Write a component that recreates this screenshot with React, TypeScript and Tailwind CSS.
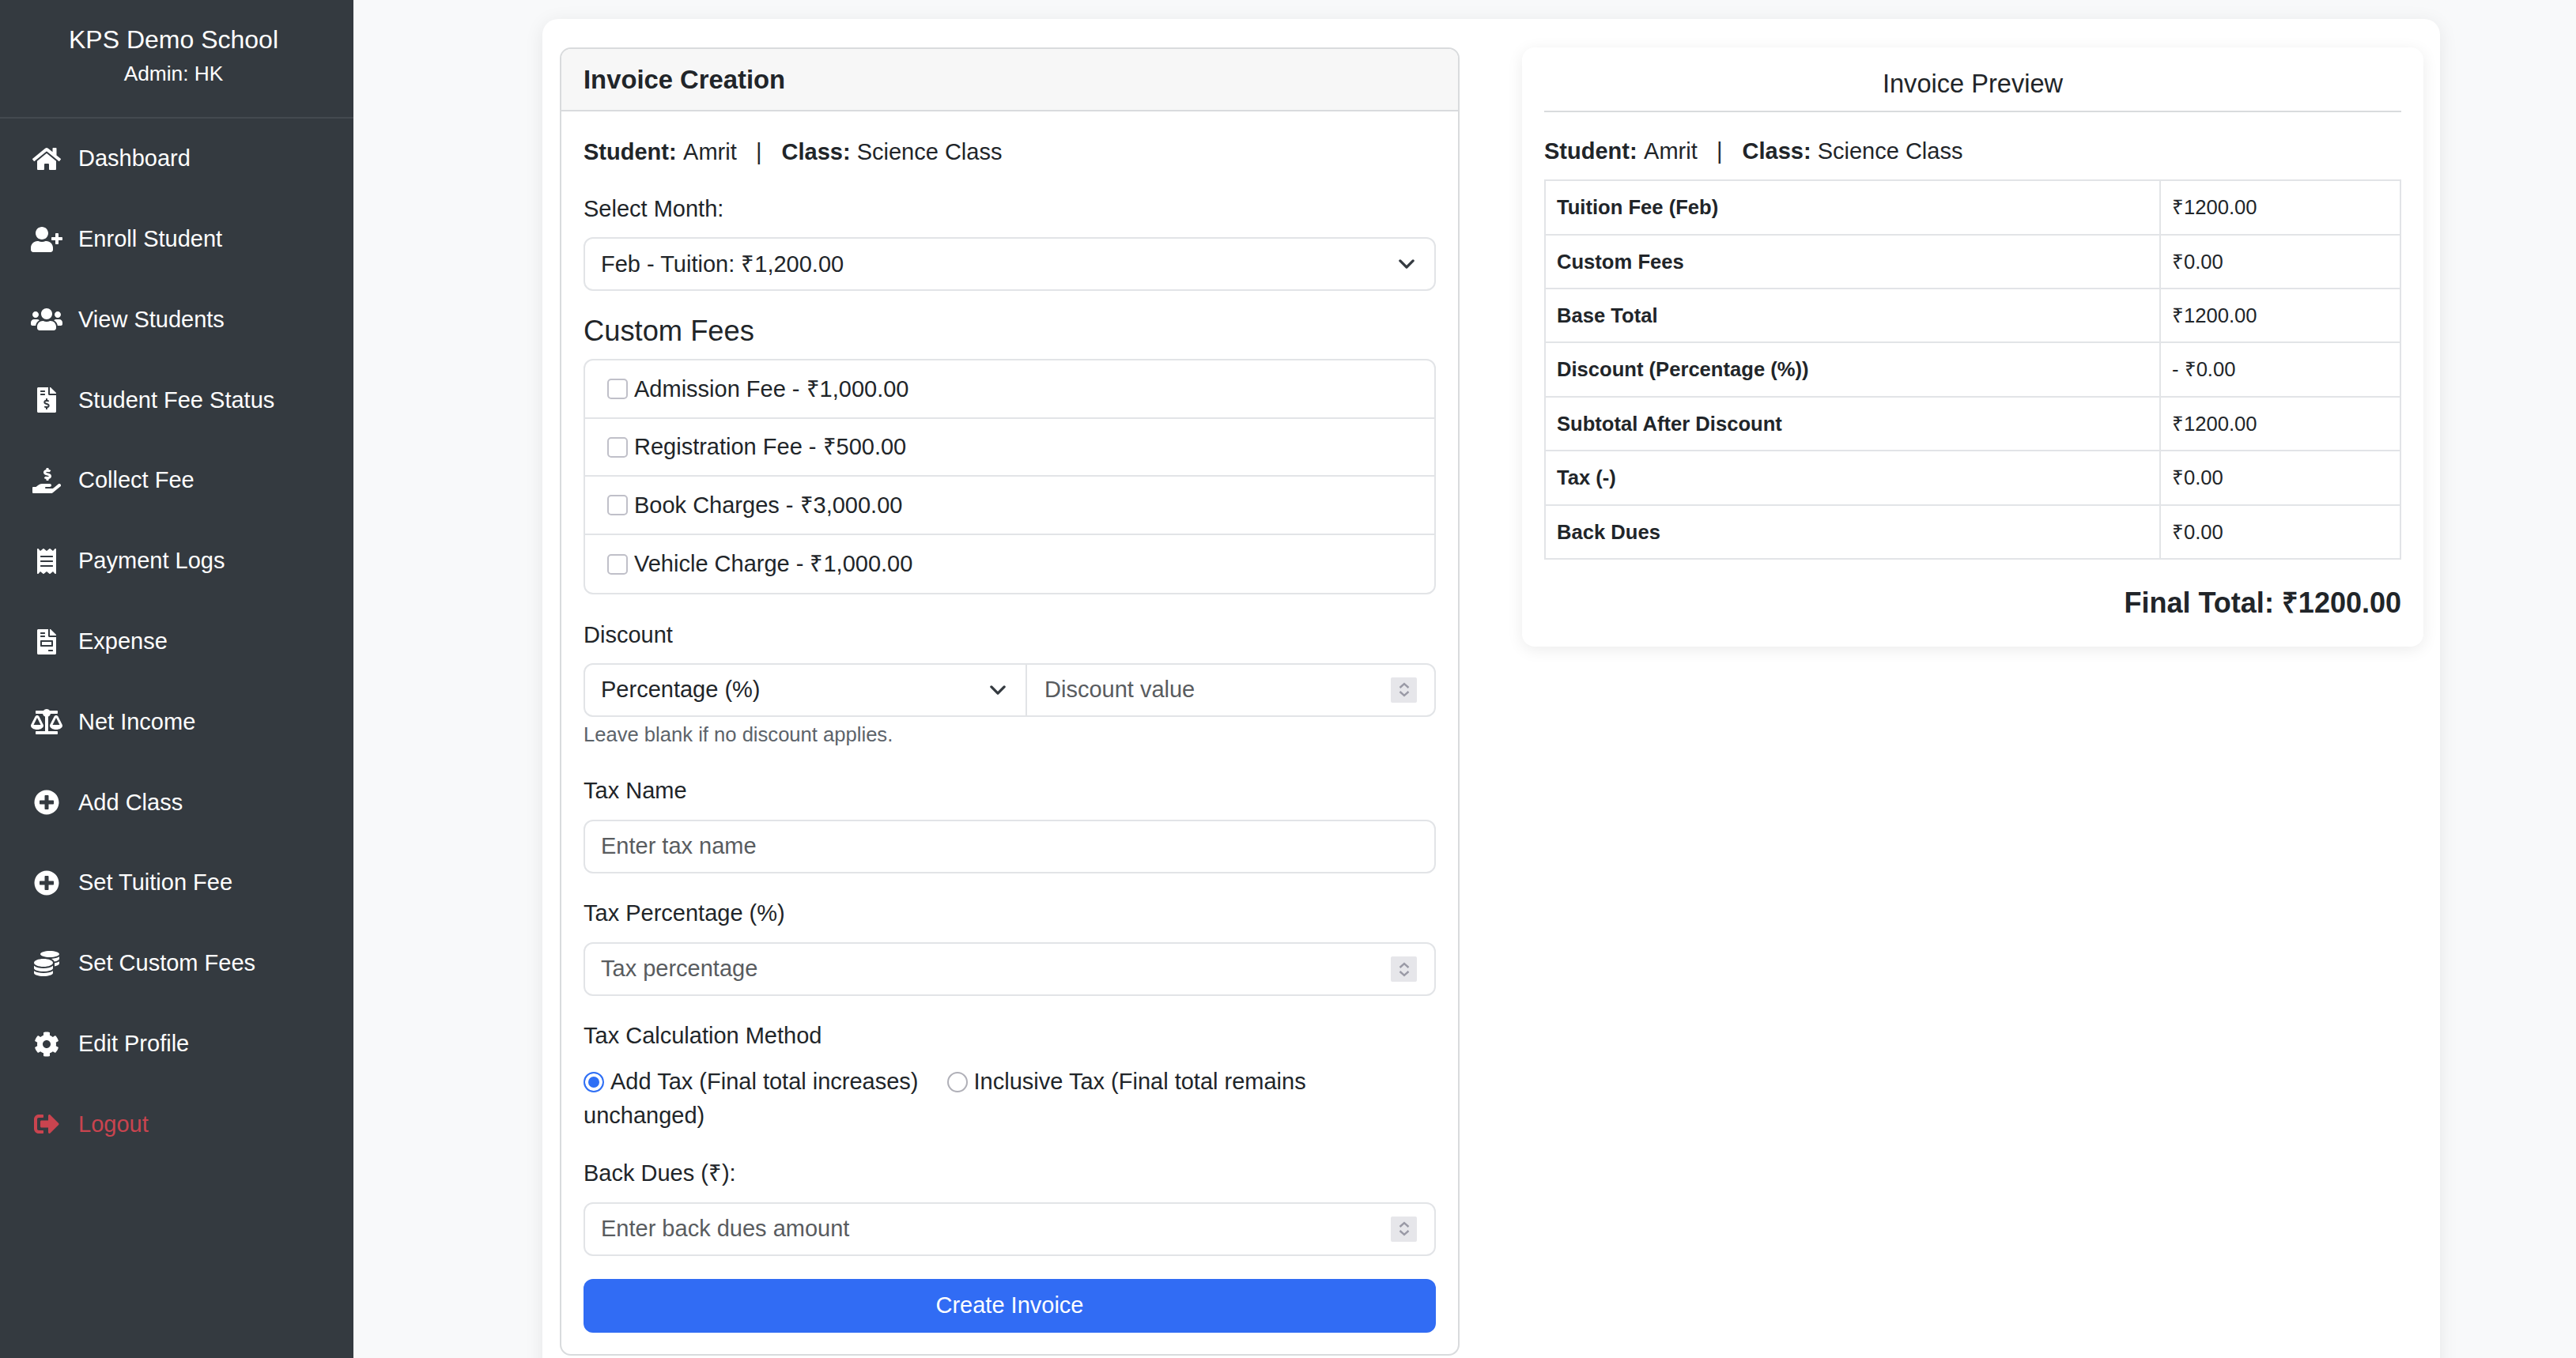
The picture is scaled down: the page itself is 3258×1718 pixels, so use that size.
import React from "react";
import { FaHome, FaUserPlus, FaUsers, FaFileInvoiceDollar, FaHandHoldingUsd, FaReceipt, FaFileInvoice, FaBalanceScale, FaPlusCircle, FaCoins, FaCog, FaSignOutAlt } from "react-icons/fa";

const nav = [
  { icon: FaHome, size: "w-[36px] h-[32px]", label: "Dashboard" },
  { icon: FaUserPlus, size: "w-[40px] h-[32px]", label: "Enroll Student" },
  { icon: FaUsers, size: "w-[40px] h-[32px]", label: "View Students" },
  { icon: FaFileInvoiceDollar, size: "w-[24px] h-[32px]", label: "Student Fee Status" },
  { icon: FaHandHoldingUsd, size: "w-[36px] h-[32px]", label: "Collect Fee" },
  { icon: FaReceipt, size: "w-[24px] h-[32px]", label: "Payment Logs" },
  { icon: FaFileInvoice, size: "w-[24px] h-[32px]", label: "Expense" },
  { icon: FaBalanceScale, size: "w-[40px] h-[32px]", label: "Net Income" },
  { icon: FaPlusCircle, size: "w-[32px] h-[32px]", label: "Add Class" },
  { icon: FaPlusCircle, size: "w-[32px] h-[32px]", label: "Set Tuition Fee" },
  { icon: FaCoins, size: "w-[32px] h-[32px]", label: "Set Custom Fees" },
  { icon: FaCog, size: "w-[32px] h-[32px]", label: "Edit Profile" },
];

const rows = [
  ["Tuition Fee (Feb)", "₹1200.00"],
  ["Custom Fees", "₹0.00"],
  ["Base Total", "₹1200.00"],
  ["Discount (Percentage (%))", "- ₹0.00"],
  ["Subtotal After Discount", "₹1200.00"],
  ["Tax (-)", "₹0.00"],
  ["Back Dues", "₹0.00"],
];

const fees = ["Admission Fee - ₹1,000.00", "Registration Fee - ₹500.00", "Book Charges - ₹3,000.00", "Vehicle Charge - ₹1,000.00"];

function Chevron() {
  return (
    <svg viewBox="0 0 16 16" className="w-[26px] h-[26px] shrink-0" fill="none" stroke="#343a40" strokeWidth="2" strokeLinecap="round" strokeLinejoin="round">
      <path d="m3 5.5 5 5 5-5" />
    </svg>
  );
}

function Spinner() {
  return (
    <div className="w-[33px] h-[32px] shrink-0 rounded-[2px] bg-[#e6e6ea] flex flex-col items-center justify-center gap-[3px]">
      <svg viewBox="0 0 14 8" className="w-[14px] h-[8px]" fill="none" stroke="#9a9aa6" strokeWidth="2.4"><path d="m1.5 7 5.5-5 5.5 5" /></svg>
      <svg viewBox="0 0 14 8" className="w-[14px] h-[8px]" fill="none" stroke="#9a9aa6" strokeWidth="2.4"><path d="m1.5 1 5.5 5 5.5-5" /></svg>
    </div>
  );
}

function Label({ children, className = "mb-[15px]" }: { children: React.ReactNode; className?: string }) {
  return <label className={"block leading-[43.2px] " + className}>{children}</label>;
}

function TextField({ placeholder, number }: { placeholder: string; number?: boolean }) {
  return (
    <div className="h-[68px] flex items-center border-2 border-[#e2e4e7] rounded-[12px] bg-white pl-[20px] pr-[22px]">
      <input type="text" placeholder={placeholder} className="flex-1 min-w-0 bg-transparent outline-none placeholder:text-[#595c5f]" />
      {number && <Spinner />}
    </div>
  );
}

function StudentLine() {
  return (
    <p className="leading-[43.2px]">
      <b className="font-bold mr-[2px]">Student:</b> Amrit &nbsp;&nbsp;|&nbsp;&nbsp; <b className="font-bold ml-[1px]">Class:</b> Science Class
    </p>
  );
}

export default function App() {
  return (
    <div className="w-[3258px] h-[1718px] overflow-hidden flex bg-[#f8f9fa] text-[29px] text-[#212529] font-['Liberation_Sans',Arial,sans-serif]">
      <aside className="w-[447px] shrink-0 h-full bg-[#343a40] text-white">
        <div className="h-[150px] border-b-2 border-[#444a50] pt-[30px] text-center">
          <div className="text-[32px] leading-[40px] pr-[8px]">KPS Demo School</div>
          <div className="text-[26.3px] leading-[38px] mt-[4px] pr-[8px]">Admin: HK</div>
        </div>
        <nav>
          {nav.map((n) => (
            <div key={n.label} className="h-[101.8px] flex items-center pl-[38px] gap-[20px]">
              <span className="w-[41px] flex justify-center"><n.icon className={n.size} /></span>
              <span>{n.label}</span>
            </div>
          ))}
          <div className="h-[101.8px] flex items-center pl-[38px] gap-[20px] text-[#c9444f]">
            <span className="w-[41px] flex justify-center"><FaSignOutAlt className="w-[32px] h-[32px]" /></span>
            <span>Logout</span>
          </div>
        </nav>
      </aside>

      <main className="flex-1 min-w-0 pl-[239px] pt-[24px]">
        <div className="w-[2400px] h-[1800px] bg-white rounded-[20px] shadow-[0_4px_24px_rgba(0,0,0,0.08)] pt-[36px] pl-[22px] pr-[21px] flex items-start justify-between">
          <section className="w-[1138px] border-2 border-[#d9dbdd] rounded-[14px] bg-white overflow-hidden">
            <div className="h-[79px] bg-[#f7f7f7] border-b-2 border-[#d9dbdd] flex items-center px-[28px]">
              <h2 className="text-[32.8px] font-bold">Invoice Creation</h2>
            </div>
            <div className="px-[28px] pt-[30px] pb-[27px]">
              <div className="mb-[29px]"><StudentLine /></div>
              <Label className="mb-[14px]">Select Month:</Label>
              <div className="h-[68px] flex items-center border-2 border-[#e2e4e7] rounded-[12px] pl-[20px] pr-[22px] mb-[29px]">
                <select className="flex-1 min-w-0 appearance-none bg-transparent outline-none"><option>Feb - Tuition: ₹1,200.00</option></select>
                <Chevron />
              </div>

              <h3 className="text-[36.3px] leading-[43px] mb-[14px]">Custom Fees</h3>
              <ul className="border-2 border-[#e2e4e7] rounded-[12px] mb-[30px]">
                {fees.map((f, i) => (
                  <li key={f} className={"h-[73.5px] flex items-center pl-[28px] gap-[8px] " + (i < 3 ? "border-b-2 border-[#e2e4e7]" : "")}>
                    <input type="checkbox" className="appearance-none w-[26px] h-[26px] border-2 border-[#c0c0c9] rounded-[5px] bg-white" />
                    <span className="pt-[1px]">{f}</span>
                  </li>
                ))}
              </ul>

              <Label className="mb-[13px]">Discount</Label>
              <div className="h-[68px] flex border-2 border-[#e2e4e7] rounded-[12px]">
                <div className="w-[559px] shrink-0 flex items-center pl-[20px] pr-[22px] border-r-2 border-[#e2e4e7]">
                  <select className="flex-1 min-w-0 appearance-none bg-transparent outline-none"><option>Percentage (%)</option></select>
                  <Chevron />
                </div>
                <div className="flex-1 min-w-0 flex items-center pl-[22px] pr-[22px]">
                  <input type="text" placeholder="Discount value" className="flex-1 min-w-0 bg-transparent outline-none placeholder:text-[#595c5f]" />
                  <Spinner />
                </div>
              </div>
              <p className="text-[25.6px] leading-[38px] mt-[3px] mb-[31px] text-[#5c636a]">Leave blank if no discount applies.</p>

              <Label>Tax Name</Label>
              <div className="mb-[29px]"><TextField placeholder="Enter tax name" /></div>

              <Label>Tax Percentage (%)</Label>
              <div className="mb-[29px]"><TextField placeholder="Tax percentage" number /></div>

              <Label>Tax Calculation Method</Label>
              <div className="leading-[43.2px] pr-[10px] mb-[29px]">
                <label>
                  <input type="radio" name="taxMethod" defaultChecked className="appearance-none inline-block align-[-4px] w-[26px] h-[26px] rounded-full border-2 border-[#3070f5] bg-[#3070f5] shadow-[inset_0_0_0_4px_white] mr-[8px]" />
                  Add Tax (Final total increases)
                </label>
                <label className="ml-[36px]">
                  <input type="radio" name="taxMethod" className="appearance-none inline-block align-[-4px] w-[26px] h-[26px] rounded-full border-2 border-[#b0b0b8] bg-white mr-[8px]" />
                  Inclusive Tax (Final total remains unchanged)
                </label>
              </div>

              <Label>Back Dues (₹):</Label>
              <div className="mb-[29px]"><TextField placeholder="Enter back dues amount" number /></div>

              <button type="button" className="w-full h-[68px] rounded-[12px] bg-[#316cf4] text-white">Create Invoice</button>
            </div>
          </section>

          <section className="w-[1140px] h-[758px] rounded-[16px] bg-white shadow-[0_4px_20px_rgba(0,0,0,0.08)] px-[28px] pt-[24px]">
            <h2 className="text-[32.6px] leading-[44px] text-center pb-[12px] border-b-2 border-[#d9dbdd] mb-[28px]">Invoice Preview</h2>
            <div className="mb-[14px]"><StudentLine /></div>
            <table className="w-full border-collapse text-[25.6px]">
              <tbody>
                {rows.map(([a, b]) => (
                  <tr key={a} className="h-[68.4px]">
                    <th className="w-[778px] border-2 border-[#e2e4e7] text-left font-bold pl-[14px]">{a}</th>
                    <td className="border-2 border-[#e2e4e7] pl-[14px]">{b}</td>
                  </tr>
                ))}
              </tbody>
            </table>
            <div className="text-[36px] font-bold text-right mt-[28px]">Final Total: ₹1200.00</div>
          </section>
        </div>
      </main>
    </div>
  );
}
